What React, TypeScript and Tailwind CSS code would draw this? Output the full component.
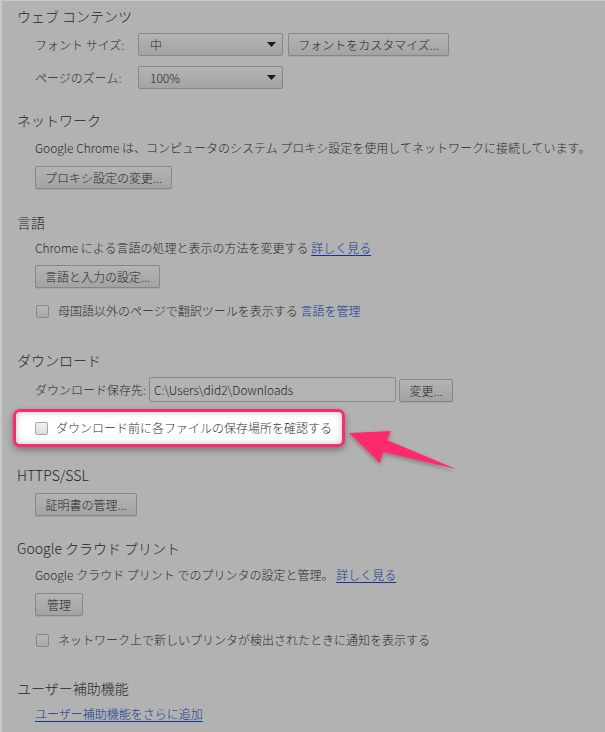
import React from "react";

const FONT = "font-['Noto_Sans_CJK_JP','Noto_Sans',sans-serif] font-light";

function H({ children, mt }: { children: React.ReactNode; mt: string }) {
  return (
    <div className={`${mt} h-[20px] text-[14px] leading-[20px] text-[#262626] whitespace-nowrap`}>
      {children}
    </div>
  );
}

function Btn({ children, w, className = "" }: { children: React.ReactNode; w: string; className?: string }) {
  return (
    <div
      className={`${w} ${className} h-[23px] flex items-center justify-center rounded-[2px] border border-[#878787] bg-gradient-to-b from-[#b4b4b4] to-[#a3a3a3] shadow-[0_1px_0_rgba(0,0,0,0.08)] text-[12px] leading-none text-[#262626] whitespace-nowrap`}
    >
      {children}
    </div>
  );
}

function Select({ value }: { value: string }) {
  return (
    <div className="w-[145px] h-[23px] flex items-center justify-between pl-[11px] pr-[6px] rounded-[2px] border border-[#878787] bg-gradient-to-b from-[#b4b4b4] to-[#a3a3a3] text-[12px] text-[#262626]">
      <span>{value}</span>
      <svg width="9" height="5" viewBox="0 0 9 5">
        <polygon points="0,0 9,0 4.5,5" fill="#1a1a1a" />
      </svg>
    </div>
  );
}

function Check({ light = false }: { light?: boolean }) {
  return (
    <div
      className={
        light
          ? "w-[13px] h-[13px] rounded-[2px] border border-[#a8a8a8] bg-gradient-to-b from-[#f2f2f2] to-[#dcdcdc] shrink-0"
          : "w-[13px] h-[13px] rounded-[2px] border border-[#878787] bg-gradient-to-b from-[#b8b8b8] to-[#a8a8a8] shrink-0"
      }
    />
  );
}

function Link({ children }: { children: React.ReactNode }) {
  return <span className="text-[#10388f] underline underline-offset-2">{children}</span>;
}

export default function App() {
  return (
    <div
      className={`${FONT} relative w-[605px] h-[732px] overflow-hidden bg-[#b2b2b2] border-l-2 border-t border-[#c8c8c8] text-[#2a2a2a]`}
    >
      <div className="pl-[15px] pt-[5px]">
        <H mt="mt-0">ウェブ コンテンツ</H>
        <div className="pl-[18px]">
          <div className="mt-[7px] h-[23px] flex items-center">
            <div className="w-[103px] text-[12px]">フォント サイズ:</div>
            <Select value="中" />
            <Btn w="w-[161px]" className="ml-[5px]">フォントをカスタマイズ...</Btn>
          </div>
          <div className="mt-[10px] h-[23px] flex items-center">
            <div className="w-[103px] text-[12px]">ページのズーム:</div>
            <Select value="100%" />
          </div>
        </div>

        <H mt="mt-[21px]">ネットワーク</H>
        <div className="pl-[18px]">
          <div className="mt-[9px] h-[18px] text-[12px] leading-[18px] whitespace-nowrap">
            Google Chrome は、コンピュータのシステム プロキシ設定を使用してネットワークに接続しています。
          </div>
          <Btn w="w-[137px]" className="mt-[9px]">プロキシ設定の変更...</Btn>
        </div>

        <H mt="mt-[23px]">言語</H>
        <div className="pl-[18px]">
          <div className="mt-[7px] h-[18px] text-[12px] leading-[18px] whitespace-nowrap">
            Chrome による言語の処理と表示の方法を変更する <Link>詳しく見る</Link>
          </div>
          <Btn w="w-[125px]" className="mt-[8px]">言語と入力の設定...</Btn>
          <div className="mt-[14px] h-[18px] flex items-center gap-[9px] text-[12px] whitespace-nowrap">
            <div className="ml-[1px]">
              <Check />
            </div>
            <span>
              母国語以外のページで翻訳ツールを表示する <span className="text-[#10388f]">言語を管理</span>
            </span>
          </div>
        </div>

        <H mt="mt-[30px]">ダウンロード</H>
        <div className="pl-[18px]">
          <div className="mt-[7px] h-[25px] flex items-center">
            <div className="w-[114px] text-[12px] whitespace-nowrap">ダウンロード保存先:</div>
            <div className="w-[247px] h-[25px] flex items-center pl-[4px] rounded-[2px] border border-[#8a8a8a] bg-[#b3b3b3] text-[12px] text-[#262626]">
              C:\Users\did2\Downloads
            </div>
            <Btn w="w-[54px]" className="ml-[3px] self-end">変更...</Btn>
          </div>
          <div className="mt-[7px] -ml-[22px] w-[332px] h-[38px] flex items-center gap-[8px] pl-[19px] rounded-[7px] border-[3px] border-[#ff2a6c] bg-white shadow-[0_3px_7px_rgba(0,0,0,0.35),inset_0_0_7px_rgba(0,0,0,0.22)] text-[12px] text-[#333] whitespace-nowrap">
            <Check light />
            <span>ダウンロード前に各ファイルの保存場所を確認する</span>
          </div>
        </div>

        <H mt="mt-[18px]">HTTPS/SSL</H>
        <div className="pl-[18px]">
          <Btn w="w-[102px]" className="mt-[8px]">証明書の管理...</Btn>
        </div>

        <H mt="mt-[22px]">Google クラウド プリント</H>
        <div className="pl-[18px]">
          <div className="mt-[8px] h-[18px] text-[12px] leading-[18px] whitespace-nowrap">
            Google クラウド プリント でのプリンタの設定と管理。 <Link>詳しく見る</Link>
          </div>
          <Btn w="w-[48px]" className="mt-[9px]">管理</Btn>
          <div className="mt-[15px] h-[18px] flex items-center gap-[9px] text-[12px] whitespace-nowrap">
            <div className="ml-[1px]">
              <Check />
            </div>
            <span>ネットワーク上で新しいプリンタが検出されたときに通知を表示する</span>
          </div>
        </div>

        <H mt="mt-[29px]">ユーザー補助機能</H>
        <div className="pl-[18px]">
          <div className="mt-[7px] h-[18px] text-[12px] leading-[18px] whitespace-nowrap">
            <Link>ユーザー補助機能をさらに追加</Link>
          </div>
        </div>
      </div>

      <svg
        className="absolute left-[-2px] top-[-1px] pointer-events-none"
        width="605"
        height="732"
        viewBox="0 0 605 732"
      >
        <defs>
          <filter id="sh" x="-20%" y="-20%" width="140%" height="160%">
            <feDropShadow dx="0" dy="2" stdDeviation="2" floodColor="#000" floodOpacity="0.3" />
          </filter>
        </defs>
        <polygon
          points="349,433 391,431 387,440 456,469 383,452 380,463"
          fill="#ff2a6c"
          filter="url(#sh)"
        />
      </svg>
    </div>
  );
}
